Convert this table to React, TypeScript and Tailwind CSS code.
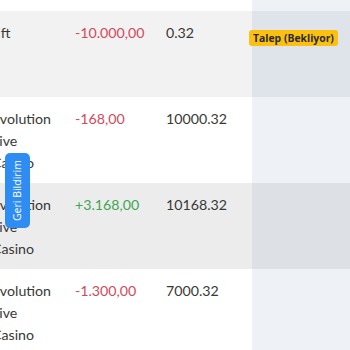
const rows = [
  { name: "Gift", amount: "-10.000,00", balance: "0.32", status: "Talep (Bekliyor)", bg: "bg-[#f2f2f2]", tint: "bg-[#dfe4ea]" },
  { name: "Evolution Live Casino", amount: "-168,00", balance: "10000.32", bg: "bg-white", tint: "bg-[#eef2f7]" },
  { name: "Evolution Live Casino", amount: "+3.168,00", balance: "10168.32", bg: "bg-[#ececec]", tint: "bg-[#dde1e6]" },
  { name: "Evolution Live Casino", amount: "-1.300,00", balance: "7000.32", bg: "bg-white", tint: "bg-[#eef2f7]" },
];

export default function App() {
  return (
    <div className="relative w-[350px] h-[350px] overflow-hidden bg-white font-['Lato',sans-serif] text-[14.2px] text-[#383838]">
      <div className="ml-[-20px] w-[420px]">
        {/* header tail */}
        <div className="grid grid-cols-[83px_91px_98px_1fr] h-[11px]">
          <div />
          <div />
          <div />
          <div className="bg-[#eef2f7]" />
        </div>

        {rows.map((r, i) => (
          <div
            key={i}
            className={`grid grid-cols-[83px_91px_98px_1fr] h-[86px] ${r.bg}`}
          >
            <div className="px-3 py-[11px] leading-[22px]">
              {r.name === "Gift" ? <span className="ml-[-5px]">Gift</span> : r.name}
            </div>
            <div
              className={`pl-3 py-[11px] leading-[22px] ${
                r.amount.startsWith("+") ? "text-[#3ea653]" : "text-[#d14a5c]"
              }`}
            >
              {r.amount}
            </div>
            <div className="pl-3 py-[11px] leading-[22px]">{r.balance}</div>
            <div className={`${r.tint} pt-[15px]`}>
              {r.status && (
                <span className="ml-[-3px] inline-block rounded-[3px] bg-[#fcc010] px-[4px] h-[16px] leading-[16px] text-[10.4px] font-bold text-[#2b2b2b] font-['Open_Sans',sans-serif]">
                  {r.status}
                </span>
              )}
            </div>
          </div>
        ))}
      </div>

      {/* feedback tab */}
      <button className="absolute left-[5px] top-[153px] w-[25px] h-[75px] rounded-[5px] bg-[#2f8cf2] flex items-center justify-center">
        <span className="[writing-mode:vertical-rl] rotate-180 text-white text-[10.5px] font-['Open_Sans',sans-serif] leading-none whitespace-nowrap">
          Geri Bildirim
        </span>
      </button>
    </div>
  );
}
